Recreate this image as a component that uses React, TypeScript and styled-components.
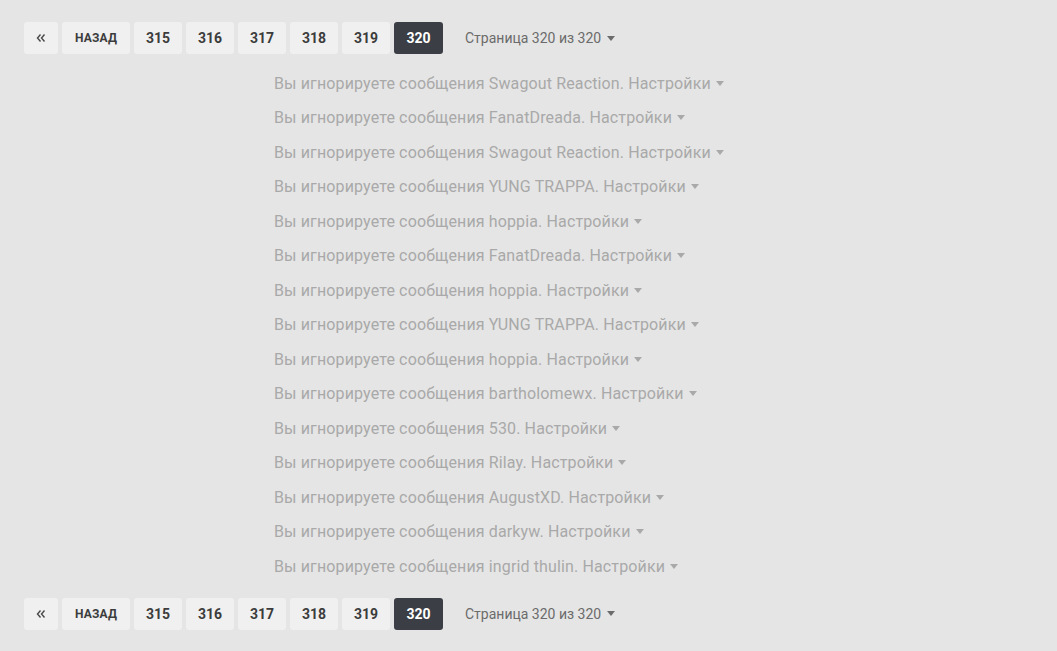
import styled, { createGlobalStyle } from "styled-components"

const GlobalStyle = createGlobalStyle`
body {
  margin: 0;
  background: #e5e5e5;
  font-family: Roboto, "Liberation Sans", sans-serif;
}
`

const Page = styled.div`
padding: 22px 24px 0;
`

const PageNav = styled.div`
display: flex;
align-items: center;
gap: 4px;
height: 32px;
`

const NavButton = styled.div<{ $active?: boolean; $w?: number }>`
display: flex;
align-items: center;
justify-content: center;
height: 32px;
width: ${p => p.$w ?? 48}px;
border-radius: 3px;
background: ${p => (p.$active ? "#3b3e45" : "#f0f0f0")};
color: ${p => (p.$active ? "#fff" : "#3c3c3c")};
font-size: 14px;
font-weight: 700;
box-sizing: border-box;
`

const BackLabel = styled.span`
font-size: 12px;
letter-spacing: 0.2px;
`

const PageInfo = styled.div`
display: flex;
align-items: center;
gap: 6px;
margin-left: 18px;
font-size: 14px;
color: #6b6b6b;
`

const Caret = styled.span`
display: inline-block;
width: 0;
height: 0;
border-left: 4.5px solid transparent;
border-right: 4.5px solid transparent;
border-top: 5px solid currentColor;
`

const List = styled.div`
padding: 12px 0 14px 250px;
`

const Ignored = styled.div`
height: 34.5px;
display: flex;
align-items: center;
gap: 5px;
font-size: 16px;
letter-spacing: 0.13px;
color: #a9a9a9;
`

const DoubleLeft = () => (
  <svg width="10" height="10" viewBox="0 0 10 10" fill="none" stroke="#4a4a4a" strokeWidth="1.4">
    <path d="M4.5 1.5 L1.5 5 L4.5 8.5" />
    <path d="M8.5 1.5 L5.5 5 L8.5 8.5" />
  </svg>
)

const Pagination = () => (
  <PageNav>
    <NavButton $w={34}><DoubleLeft /></NavButton>
    <NavButton $w={68}><BackLabel>НАЗАД</BackLabel></NavButton>
    {[315, 316, 317, 318, 319].map(n => (
      <NavButton key={n}>{n}</NavButton>
    ))}
    <NavButton $active $w={49}>320</NavButton>
    <PageInfo>Страница 320 из 320 <Caret /></PageInfo>
  </PageNav>
)

const names = [
  "Swagout Reaction",
  "FanatDreada",
  "Swagout Reaction",
  "YUNG TRAPPA",
  "hoppia",
  "FanatDreada",
  "hoppia",
  "YUNG TRAPPA",
  "hoppia",
  "bartholomewx",
  "530",
  "Rilay",
  "AugustXD",
  "darkyw",
  "ingrid thulin",
]

const App = () => (
  <Page>
    <GlobalStyle />
    <Pagination />
    <List>
      {names.map((n, i) => (
        <Ignored key={i}>
          <span>Вы игнорируете сообщения {n}. Настройки</span>
          <Caret />
        </Ignored>
      ))}
    </List>
    <Pagination />
  </Page>
)

export default App
